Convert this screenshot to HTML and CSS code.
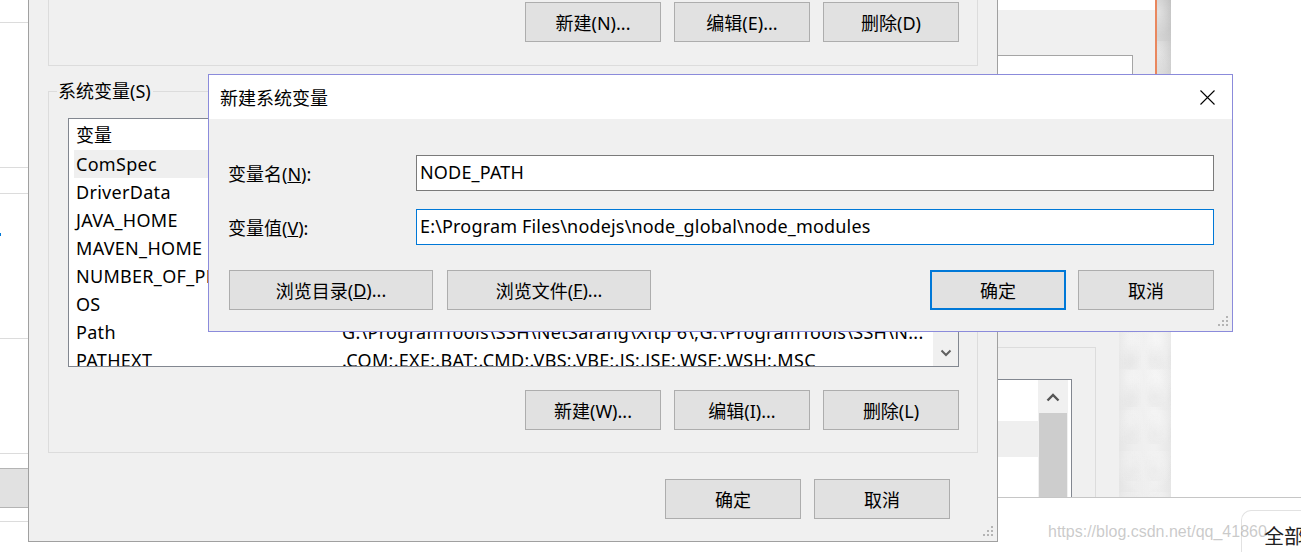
FILE: index.html
```html
<!DOCTYPE html>
<html lang="zh-CN">
<head>
  <meta charset="UTF-8" />
  <meta name="viewport" content="width=device-width, initial-scale=1.0"/>
  <title>新建系统变量</title>
  <link rel="stylesheet" href="styles.css">
</head>
<body>
<div class="desk">

  <!-- window peeking in on the left -->
  <div class="side-left">
    <div class="sl sl-1"></div>
    <div class="sl sl-2"></div>
    <div class="sl sl-3"></div>
    <div class="sl sl-4"><span class="blue-mark"></span></div>
    <div class="sl sl-5"></div>
    <div class="sl sl-6"></div>
    <div class="sl sl-band"></div>
    <div class="sl sl-7"></div>
  </div>

  <div class="wallpaper"></div>

  <!-- windows behind on the right -->
  <div class="side-top">
    <div class="st-head"></div>
    <div class="st-box"></div>
  </div>

  <div class="side-bottom">
    <div class="sb-group">
      <div class="sb-list">
        <div class="sb-rows"><div class="sb-row"></div></div>
        <div class="sb-scroll">
          <div class="sb-up">
            <svg width="14" height="9" viewBox="0 0 14 9"><polyline points="1.5,7.5 7,2 12.5,7.5" fill="none" stroke="#555" stroke-width="2.4"/></svg>
          </div>
          <div class="sb-thumb"></div>
        </div>
      </div>
    </div>
  </div>

  <div class="page-bar">
    <div class="all-tab">全部</div>
  </div>

  <!-- 环境变量 window -->
  <div class="env-window">
    <div class="grp-top">
      <button class="btn">新建(N)...</button>
      <button class="btn">编辑(E)...</button>
      <button class="btn">删除(D)</button>
    </div>

    <div class="grp-sys">
      <span class="grp-label">系统变量(S)</span>
      <div class="listbox">
        <div class="list-main">
          <div class="list-head"><span class="c1">变量</span><span class="c2">值</span></div>
          <div class="row hover"><span class="c1">ComSpec</span><span class="c2">C:\WINDOWS\system32\cmd.exe</span></div>
          <div class="row"><span class="c1">DriverData</span><span class="c2">C:\Windows\System32\Drivers\DriverData</span></div>
          <div class="row"><span class="c1">JAVA_HOME</span><span class="c2">C:\Program Files\Java\jdk1.8.0_181</span></div>
          <div class="row"><span class="c1">MAVEN_HOME</span><span class="c2">G:\ProgramTools\apache-maven-3.6.0</span></div>
          <div class="row"><span class="c1">NUMBER_OF_PROCESSORS</span><span class="c2">8</span></div>
          <div class="row"><span class="c1">OS</span><span class="c2">Windows_NT</span></div>
          <div class="row"><span class="c1">Path</span><span class="c2">G:\ProgramTools\SSH\NetSarang\Xftp 6\;G:\ProgramTools\SSH\N...</span></div>
          <div class="row"><span class="c1">PATHEXT</span><span class="c2">.COM;.EXE;.BAT;.CMD;.VBS;.VBE;.JS;.JSE;.WSF;.WSH;.MSC</span></div>
        </div>
        <div class="list-scroll">
          <div class="scroll-down">
            <svg width="12" height="8" viewBox="0 0 12 8"><polyline points="1.5,1.5 6,6 10.5,1.5" fill="none" stroke="#606060" stroke-width="2"/></svg>
          </div>
        </div>
      </div>
      <div class="btn-row">
        <button class="btn">新建(W)...</button>
        <button class="btn">编辑(I)...</button>
        <button class="btn">删除(L)</button>
      </div>
    </div>

    <div class="win-foot">
      <button class="btn">确定</button>
      <button class="btn">取消</button>
    </div>

    <svg class="grip" width="11" height="11" viewBox="0 0 11 11">
      <rect x="8" y="0" width="2" height="2"/><rect x="4" y="4" width="2" height="2"/><rect x="8" y="4" width="2" height="2"/>
      <rect x="0" y="8" width="2" height="2"/><rect x="4" y="8" width="2" height="2"/><rect x="8" y="8" width="2" height="2"/>
    </svg>
  </div>

  <!-- 新建系统变量 dialog -->
  <div class="dialog">
    <div class="dlg-title">
      <span>新建系统变量</span>
      <svg width="15" height="15" viewBox="0 0 15 15"><path d="M0.5 0.5L14.5 14.5M14.5 0.5L0.5 14.5" stroke="#000" stroke-width="1.1"/></svg>
    </div>
    <div class="dlg-body">
      <div class="field">
        <label>变量名(<u>N</u>):</label>
        <input type="text" value="NODE_PATH">
      </div>
      <div class="field">
        <label>变量值(<u>V</u>):</label>
        <input type="text" class="focus" value="E:\Program Files\nodejs\node_global\node_modules">
      </div>
      <div class="dlg-actions">
        <div class="grp">
          <button class="btn wide">浏览目录(<u>D</u>)...</button>
          <button class="btn wide">浏览文件(<u>F</u>)...</button>
        </div>
        <div class="grp tight">
          <button class="btn default">确定</button>
          <button class="btn">取消</button>
        </div>
      </div>
    </div>
    <svg class="grip" width="11" height="11" viewBox="0 0 11 11">
      <rect x="8" y="0" width="2" height="2"/><rect x="4" y="4" width="2" height="2"/><rect x="8" y="4" width="2" height="2"/>
      <rect x="0" y="8" width="2" height="2"/><rect x="4" y="8" width="2" height="2"/><rect x="8" y="8" width="2" height="2"/>
    </svg>
  </div>

  <div class="watermark">https://blog.csdn.net/qq_41860</div>
</div>
</body>
</html>
```

FILE: styles.css
```css
* {
  box-sizing: border-box;
}

body {
  margin: 0;
  background: #fff;
  font-family: "Noto Sans", "Noto Sans CJK SC", sans-serif;
  font-size: 18px;
  color: #000;
  overflow: hidden;
}

.desk {
  position: relative;
  width: 1301px;
  height: 552px;
  overflow: hidden;
}

/* left background window */
.side-left {
  position: absolute;
  left: 0;
  top: 0;
  width: 28px;
  height: 552px;
  background: #fff;
}

.sl {
  border-bottom: 1px solid #dcdcdc;
}

.sl-1 { height: 23px; }
.sl-2 { height: 145px; }
.sl-3 { height: 26px; }
.sl-4 { height: 145px; position: relative; }
.sl-5 { height: 115px; }
.sl-6 { height: 15px; border-bottom-color: #b4b4b4; }
.sl-band { height: 39px; background: #e1e1e1; border-bottom-color: #b4b4b4; }
.sl-7 { height: 14px; }

.blue-mark {
  position: absolute;
  left: 0;
  top: 39px;
  width: 1px;
  height: 3px;
  background: #0078d7;
}

/* desktop wallpaper strip */
.wallpaper {
  position: absolute;
  left: 1118px;
  top: 0;
  width: 53px;
  height: 497px;
  background:
    radial-gradient(ellipse at 40% 30%, rgba(255,255,255,0.35), transparent 60%) 0 0 / 29px 41px,
    radial-gradient(ellipse at 60% 70%, rgba(190,190,190,0.18), transparent 55%) 0 0 / 23px 37px,
    linear-gradient(90deg, rgba(0,0,0,0.04), transparent 30%, rgba(255,255,255,0.2) 70%, rgba(0,0,0,0.03)),
    linear-gradient(#c7c7c7, #d9d9d9 16%, #e8e8e8 40%, #f0f0f0 70%, #ededed);
}

.side-top {
  position: absolute;
  left: 998px;
  top: 0;
  width: 159px;
  height: 200px;
  background: #f0f0f0;
  border-right: 2px solid #e9875e;
}

.st-head {
  height: 10px;
  background: #fff;
}

.st-box {
  margin-top: 45px;
  width: 135px;
  height: 100px;
  background: #fff;
  border-top: 1px solid #a5a5a5;
  border-right: 1px solid #a5a5a5;
}

.side-bottom {
  position: absolute;
  left: 998px;
  top: 250px;
  width: 121px;
  height: 247px;
  background: #f0f0f0;
}

.sb-group {
  margin-top: 97px;
  width: 98px;
  height: 150px;
  border-top: 1px solid #dcdcdc;
  border-right: 1px solid #dcdcdc;
  padding-top: 31px;
}

.sb-list {
  width: 74px;
  height: 118px;
  background: #fff;
  border-top: 1px solid #828790;
  border-right: 1px solid #828790;
  display: flex;
}

.sb-rows {
  flex: 1;
  padding-top: 41px;
}

.sb-row {
  height: 36px;
  background: #efefef;
}

.sb-scroll {
  width: 30px;
  margin-right: 3px;
  background: #f0f0f0;
  display: flex;
  flex-direction: column;
}

.sb-up {
  height: 33px;
  display: flex;
  justify-content: center;
  padding-top: 13px;
}

.sb-thumb {
  flex: 1;
  margin: 0 1px;
  background: #cdcdcd;
}

.page-bar {
  position: absolute;
  left: 998px;
  top: 497px;
  right: 0;
  bottom: 0;
  background: #fff;
  border-top: 1px solid #c6c6c6;
}

.all-tab {
  margin: 12px 0 0 243px;
  height: 60px;
  border: 1px solid #e2e2e2;
  border-right: 0;
  border-top-left-radius: 10px;
  padding: 12px 0 0 22px;
  font-size: 20px;
  line-height: 28px;
  color: #222;
  white-space: nowrap;
}

/* shared button look */
.btn {
  width: 136px;
  height: 40px;
  flex: none;
  padding: 0;
  background: #e1e1e1;
  border: 1px solid #adadad;
  font: inherit;
  color: #000;
  display: flex;
  align-items: center;
  justify-content: center;
  white-space: nowrap;
}

.btn.default {
  border: 2px solid #0078d7;
}

.grip {
  position: absolute;
  right: 3px;
  bottom: 4px;
  fill: #b4b4b4;
}

/* environment variables window */
.env-window {
  position: absolute;
  left: 28px;
  top: 0;
  width: 970px;
  height: 542px;
  background: #f0f0f0;
  border: 1px solid #a0a0a0;
  border-top: 0;
  padding: 0 19px;
}

.grp-top {
  height: 66px;
  border: 1px solid #dcdcdc;
  border-top: 0;
  display: flex;
  justify-content: flex-end;
  align-items: flex-start;
  gap: 13px;
  padding: 2px 18px 0 0;
}

.grp-sys {
  position: relative;
  margin-top: 25px;
  height: 362px;
  border: 1px solid #dcdcdc;
  padding: 26px 18px 0 19px;
}

.grp-label {
  position: absolute;
  left: 8px;
  top: -14px;
  padding: 0 2px 0 1px;
  line-height: 26px;
  background: #f0f0f0;
}

.listbox {
  height: 249px;
  background: #fff;
  border: 1px solid #828790;
  display: flex;
  overflow: hidden;
}

.list-main {
  flex: 1;
  min-width: 0;
  padding-left: 5px;
  overflow: hidden;
}

.list-head {
  display: flex;
  height: 31px;
  line-height: 33px;
}

.row {
  display: flex;
  height: 28px;
  line-height: 28px;
  letter-spacing: 0.3px;
}

.row.hover {
  background: #efefef;
}

.c1 {
  flex: none;
  width: 268px;
  padding-left: 2px;
  white-space: nowrap;
  overflow: hidden;
}

.c2 {
  white-space: nowrap;
  overflow: hidden;
}

.list-scroll {
  width: 25px;
  flex: none;
  background: #f0f0f0;
  display: flex;
  flex-direction: column;
  justify-content: flex-end;
}

.scroll-down {
  height: 27px;
  display: flex;
  align-items: center;
  justify-content: center;
}

.btn-row {
  display: flex;
  justify-content: flex-end;
  gap: 13px;
  margin-top: 23px;
}

.win-foot {
  display: flex;
  justify-content: flex-end;
  gap: 13px;
  margin-top: 26px;
  padding-right: 28px;
}

/* new system variable dialog */
.dialog {
  position: absolute;
  left: 208px;
  top: 74px;
  width: 1025px;
  height: 258px;
  background: #f0f0f0;
  border: 1px solid #8b8bdb;
}

.dlg-title {
  height: 44px;
  background: #fff;
  display: flex;
  align-items: center;
  justify-content: space-between;
  padding: 0 17px 0 11px;
}

.dlg-body {
  padding: 36px 18px 0 19px;
}

.field {
  display: flex;
  align-items: center;
}

.field + .field {
  margin-top: 18px;
}

.field label {
  flex: none;
  width: 188px;
}

.field input {
  flex: 1;
  min-width: 0;
  height: 36px;
  margin: 0;
  padding: 0 3px 2px;
  border: 1px solid #7a7a7a;
  background: #fff;
  font: inherit;
  letter-spacing: 0.17px;
  color: #000;
  outline: none;
}

.field input.focus {
  border-color: #0078d7;
}

.dlg-actions {
  display: flex;
  justify-content: space-between;
  margin-top: 25px;
  padding-left: 1px;
}

.grp {
  display: flex;
  gap: 14px;
}

.grp.tight {
  gap: 12px;
}

.btn.wide {
  width: 204px;
}

.watermark {
  position: absolute;
  left: 1048px;
  top: 524px;
  font-family: "Liberation Sans", Arial, sans-serif;
  font-size: 16px;
  line-height: 16px;
  color: rgba(150, 150, 150, 0.5);
  white-space: nowrap;
}
```
